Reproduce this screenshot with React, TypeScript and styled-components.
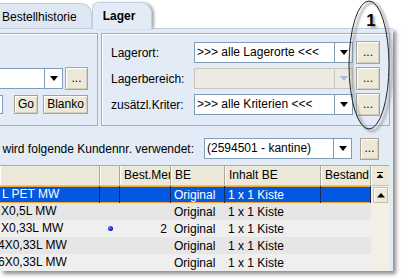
import React from 'react'
import styled, { createGlobalStyle, css } from 'styled-components'

const panelBlue = '#e3ebf7'
const groupBorder = '#b3ac98'
const buttonFace = '#ece9d8'
const inputBorder = '#7f9db9'
const fontFamily = "'Liberation Sans', Arial, sans-serif"

const GlobalStyle = createGlobalStyle`
  html, body {
    margin: 0;
    padding: 0;
    background: #fff;
  }
  body {
    font-family: ${fontFamily};
    font-size: 12px;
    color: #000;
  }
  * {
    box-sizing: border-box;
  }
`

type Article = {
  name: string
  indent: number
  dot?: boolean
  amount?: string
  selected?: boolean
}

const articles: Article[] = [
  { name: 'L PET MW', indent: 1, selected: true },
  { name: 'X0,5L MW', indent: 0 },
  { name: 'X0,33L MW', indent: 0, dot: true, amount: '2' },
  { name: '4X0,33L MW', indent: -3 },
  { name: '6X0,33L MW', indent: -3 },
]

const columns = '100px 20px 51px 54px 96px 50px'

type ComboProps = {
  width: number
  text?: string
  disabled?: boolean
}

const Combo = (props: ComboProps) => (
  <ComboBox $width={props.width}>
    <ComboText $disabled={props.disabled}>{props.text}</ComboText>
    <ComboArrow $disabled={props.disabled}>
      <Arrow $disabled={props.disabled} />
    </ComboArrow>
  </ComboBox>
)

const FilterRow = (props: { label: string; text?: string; disabled?: boolean }) => (
  <FieldRow>
    <FieldLabel>{props.label}</FieldLabel>
    <Combo width={159} text={props.text} disabled={props.disabled} />
    <XpButton $width={24} $height={23}>...</XpButton>
  </FieldRow>
)

const ArticleTable = () => (
  <TableArea>
    <TableGrid>
      <HeaderRow>
        <HeadCell />
        <HeadCell />
        <HeadCell>Best.Menge</HeadCell>
        <HeadCell>BE</HeadCell>
        <HeadCell>Inhalt BE</HeadCell>
        <HeadCell>Bestand</HeadCell>
      </HeaderRow>
      {articles.map((a, i) => (
        <DataRow key={i} $selected={a.selected} $odd={i % 2 === 1}>
          <NameCell $indent={a.indent}>{a.name}</NameCell>
          <DataCell>{a.dot && <Dot />}</DataCell>
          <DataCell $right>{a.amount}</DataCell>
          <DataCell>Original</DataCell>
          <DataCell>1 x 1 Kiste</DataCell>
          <DataCell />
        </DataRow>
      ))}
    </TableGrid>
    <ScrollColumn>
      <CornerCell>
        <svg width="8" height="8" viewBox="0 0 8 8">
          <rect x="1" y="0" width="6" height="1" fill="#000" />
          <polygon points="4,2 0.5,6 7.5,6" fill="#000" />
        </svg>
      </CornerCell>
      <ScrollButton>
        <svg width="8" height="5" viewBox="0 0 8 5">
          <polygon points="4,0 0,4.5 8,4.5" fill="#000" />
        </svg>
      </ScrollButton>
      <ScrollTrack />
    </ScrollColumn>
  </TableArea>
)

export default function App() {
  return (
    <Root>
      <GlobalStyle />
      <Window>
        <TabStrip>
          <Tab>Bestellhistorie</Tab>
          <Tab $active>Lager</Tab>
        </TabStrip>
        <Panel>
          <TopRow>
            <LeftGroup>
              <ButtonRow $height={23} $gap={2}>
                <Combo width={122} />
                <XpButton $width={23} $height={23}>...</XpButton>
              </ButtonRow>
              <ButtonRow $height={19} $gap={5}>
                <StubInput />
                <XpButton $width={24} $height={19}>Go</XpButton>
                <XpButton $width={45} $height={19}>Blanko</XpButton>
              </ButtonRow>
            </LeftGroup>
            <RightGroup>
              <FilterRow label="Lagerort:" text=">>> alle Lagerorte <<<" />
              <FilterRow label="Lagerbereich:" disabled />
              <FilterRow label="zusätzl.Kriter:" text=">>> alle Kriterien <<<" />
            </RightGroup>
          </TopRow>
          <CustomerBand>
            <CustomerLabel>
              <span>Ist kein Kunde gewählt, wird folgende Kundennr. verwendet:</span>
            </CustomerLabel>
            <Combo width={148} text="(2594501 - kantine)" />
            <XpButton $width={19} $height={22}>...</XpButton>
          </CustomerBand>
          <ArticleTable />
        </Panel>
      </Window>
      <Annotation width="64" height="140" viewBox="0 0 64 140">
        <defs>
          <filter id="soft" x="-50%" y="-50%" width="200%" height="200%">
            <feGaussianBlur stdDeviation="1.2" />
          </filter>
        </defs>
        <ellipse cx="32" cy="67" rx="20" ry="64" fill="none" stroke="#8a8a8a" strokeWidth="2" filter="url(#soft)" opacity="0.7" />
        <ellipse cx="29" cy="65" rx="20" ry="64" fill="none" stroke="#222" strokeWidth="1" />
        <AnnotationText x="33" y="28" fill="#9a9a9a" filter="url(#soft)">1</AnnotationText>
        <AnnotationText x="31" y="26" fill="#000">1</AnnotationText>
      </Annotation>
    </Root>
  )
}

const Root = styled.div`
  position: relative;
  width: 404px;
  height: 278px;
  overflow: hidden;
  background: #fff;
`

const Window = styled.div`
  width: 393px;
`

const TabStrip = styled.div`
  position: relative;
  z-index: 1;
  display: flex;
  align-items: flex-end;
  height: 28px;
  margin-left: -21px;
`

const Tab = styled.div<{ $active?: boolean }>`
  display: flex;
  align-items: center;
  flex: none;
  height: 25px;
  padding: 1px 14px 0 22px;
  font-size: 12px;
  white-space: nowrap;
  background: #dfe7f3;
  border: 1px solid #c3cfdf;
  border-bottom: none;
  border-radius: 6px 11px 0 0;
  ${(p) =>
    p.$active &&
    css`
      height: 27px;
      margin-bottom: -1px;
      padding: 0 16px 0 10px;
      font-weight: bold;
      background: ${panelBlue};
      box-shadow: 3px 0 3px -1px rgba(0, 0, 0, 0.35);
    `}
`

const Panel = styled.div`
  display: flex;
  flex-direction: column;
  height: 243px;
  padding: 4px 4px 0 0;
  background: ${panelBlue};
  border-top: 1px solid #c3cfdf;
  box-shadow: 3px 3px 4px rgba(0, 0, 0, 0.45);
`

const TopRow = styled.div`
  display: flex;
  gap: 3px;
  height: 93px;
`

const GroupBox = styled.div`
  display: flex;
  flex-direction: column;
  border: 1px solid ${groupBorder};
  box-shadow: inset 1px 1px 0 #fff;
`

const LeftGroup = styled(GroupBox)`
  flex: 0 0 157px;
  margin-left: -60px;
  padding: 33px 9px 0 0;
  gap: 5px;
`

const RightGroup = styled(GroupBox)`
  flex: 1;
  padding: 7px 9px 0 9px;
  gap: 3px;
`

const ButtonRow = styled.div<{ $height: number; $gap: number }>`
  display: flex;
  align-items: center;
  justify-content: flex-end;
  gap: ${(p) => p.$gap}px;
  height: ${(p) => p.$height}px;
`

const StubInput = styled.div`
  width: 40px;
  height: 19px;
  margin-right: 6px;
  background: #fff;
  border: 1px solid ${inputBorder};
`

const FieldRow = styled.div`
  display: flex;
  align-items: center;
  gap: 3px;
  height: 23px;
`

const FieldLabel = styled.div`
  flex: none;
  width: 80px;
  white-space: nowrap;
`

const ComboBox = styled.div<{ $width: number }>`
  display: flex;
  flex: none;
  width: ${(p) => p.$width}px;
  height: 21px;
`

const ComboText = styled.div<{ $disabled?: boolean }>`
  flex: 1;
  min-width: 0;
  padding-left: 2px;
  line-height: 19px;
  white-space: nowrap;
  overflow: hidden;
  background: ${(p) => (p.$disabled ? '#ebebe4' : '#fff')};
  border: 1px solid ${(p) => (p.$disabled ? '#c9c7ba' : inputBorder)};
`

const ComboArrow = styled.div<{ $disabled?: boolean }>`
  display: flex;
  align-items: center;
  justify-content: center;
  flex: none;
  width: 18px;
  background: ${(p) => (p.$disabled ? '#ebebe4' : '#fff')};
  border: 1px solid ${(p) => (p.$disabled ? '#c9c7ba' : inputBorder)};
  border-left: none;
`

const Arrow = styled.div<{ $disabled?: boolean }>`
  width: 0;
  height: 0;
  border-left: 4px solid transparent;
  border-right: 4px solid transparent;
  border-top: 5px solid ${(p) => (p.$disabled ? '#a9bcd6' : '#000')};
`

const XpButton = styled.div<{ $width: number; $height: number }>`
  display: flex;
  align-items: center;
  justify-content: center;
  flex: none;
  width: ${(p) => p.$width}px;
  height: ${(p) => p.$height}px;
  padding-bottom: 1px;
  font-size: 12px;
  background: ${buttonFace};
  border: 1px solid #a8a491;
  box-shadow: inset 1px 1px 0 #fff, inset -1px -1px 0 #d4cfbc;
`

const CustomerBand = styled.div`
  display: flex;
  align-items: center;
  gap: 8px;
  height: 40px;
  padding-top: 6px;
  border-bottom: 1px solid ${groupBorder};
`

const CustomerLabel = styled.div`
  display: flex;
  justify-content: flex-end;
  flex: none;
  width: 194px;
  margin-right: 2px;
  overflow: hidden;
  white-space: nowrap;
`

const TableArea = styled.div`
  display: flex;
  flex: 1;
  min-height: 0;
`

const TableGrid = styled.div`
  width: 371px;
  background: #fff;
`

const HeaderRow = styled.div`
  display: grid;
  grid-template-columns: ${columns};
  height: 20px;
  background: ${buttonFace};
  border-bottom: 1px solid #c9c5b4;
`

const HeadCell = styled.div`
  padding-left: 4px;
  line-height: 19px;
  white-space: nowrap;
  overflow: hidden;
  border-right: 1px solid #aca899;
  box-shadow: inset 1px 0 0 #fff;
`

const DataRow = styled.div<{ $selected?: boolean; $odd?: boolean }>`
  display: grid;
  grid-template-columns: ${columns};
  height: 17px;
  background: ${(p) => (p.$odd ? '#e6e6e6' : '#efefef')};
  ${(p) =>
    p.$selected &&
    css`
      color: #fff;
      background: #0358e2;
      box-shadow: inset 0 1px 0 #f3a534, inset 0 -1px 0 #f3a534, inset -1px 0 0 #f3a534;
      & > div {
        border-right: 1px solid #1b2a55;
      }
    `}
`

const DataCell = styled.div<{ $right?: boolean }>`
  display: flex;
  align-items: center;
  justify-content: ${(p) => (p.$right ? 'flex-end' : 'flex-start')};
  padding: 0 4px 0 3px;
  white-space: nowrap;
  overflow: hidden;
`

const NameCell = styled.div<{ $indent: number }>`
  padding-left: 1px;
  line-height: 17px;
  white-space: nowrap;
  overflow: hidden;
  text-indent: ${(p) => p.$indent}px;
`

const Dot = styled.span`
  display: block;
  width: 5px;
  height: 5px;
  margin-left: 5px;
  border-radius: 50%;
  background: radial-gradient(circle at 35% 35%, #6a7dff, #0a0f9a 70%);
`

const ScrollColumn = styled.div`
  display: flex;
  flex-direction: column;
  width: 18px;
  background: #f2f0e4;
`

const CornerCell = styled.div`
  display: flex;
  align-items: center;
  justify-content: center;
  height: 20px;
  background: ${buttonFace};
  border-bottom: 1px solid #c9c5b4;
  box-shadow: inset 1px 0 0 #fff;
`

const ScrollButton = styled.div`
  display: flex;
  align-items: center;
  justify-content: center;
  height: 16px;
  margin: 1px 1px 0 2px;
  background: ${buttonFace};
  border: 1px solid #c2bea9;
  box-shadow: inset 1px 1px 0 #fff;
`

const ScrollTrack = styled.div`
  flex: 1;
`

const Annotation = styled.svg`
  position: absolute;
  top: 0;
  left: 340px;
  pointer-events: none;
`

const AnnotationText = styled.text`
  font-family: ${fontFamily};
  font-size: 17px;
  font-weight: bold;
  text-anchor: middle;
`
